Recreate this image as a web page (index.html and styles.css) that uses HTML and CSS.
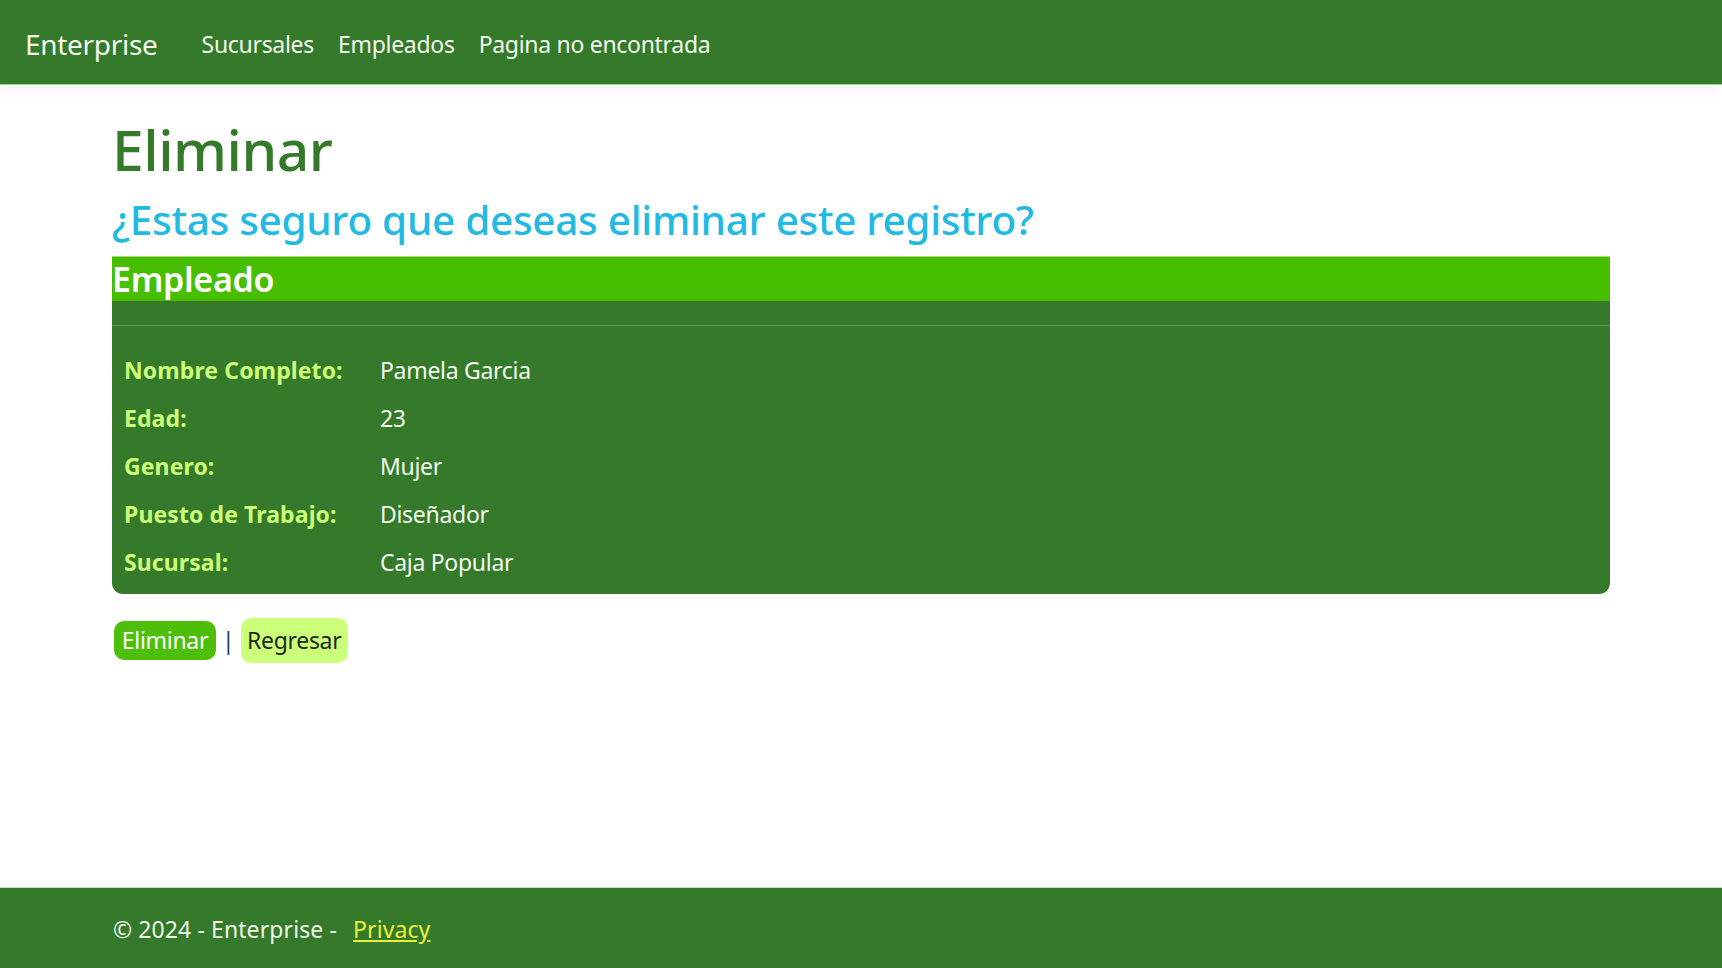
FILE: index.html
```html
<!DOCTYPE html>
<html lang="es">
<head>
<meta charset="utf-8">
<title>Eliminar - Enterprise</title>
<link rel="stylesheet" href="styles.css">
</head>
<body>
<header class="navbar">
  <a class="brand" href="#">Enterprise</a>
  <nav class="nav">
    <a class="nav-link" href="#">Sucursales</a>
    <a class="nav-link" href="#">Empleados</a>
    <a class="nav-link" href="#">Pagina no encontrada</a>
  </nav>
</header>
<main class="container">
  <h1 class="title">Eliminar</h1>
  <h2 class="question">¿Estas seguro que deseas eliminar este registro?</h2>
  <section class="card">
    <h4 class="card-header">Empleado</h4>
    <hr class="divider">
    <dl class="details">
      <dt>Nombre Completo:</dt><dd>Pamela Garcia</dd>
      <dt>Edad:</dt><dd>23</dd>
      <dt>Genero:</dt><dd>Mujer</dd>
      <dt>Puesto de Trabajo:</dt><dd>Diseñador</dd>
      <dt>Sucursal:</dt><dd>Caja Popular</dd>
    </dl>
  </section>
  <form class="actions">
    <button type="button" class="btn btn-delete">Eliminar</button>
    <span class="sep">|</span>
    <a class="btn btn-back" href="#">Regresar</a>
  </form>
</main>
<footer class="footer">
  <div class="footer-inner">© 2024 - Enterprise - <a class="privacy" href="#">Privacy</a></div>
</footer>
</body>
</html>
```
FILE: styles.css
```css
html, body {
  margin: 0;
  padding: 0;
  height: 100%;
}
body {
  font-family: "Noto Sans", "Open Sans", sans-serif;
  background: #ffffff;
  color: #212529;
  display: flex;
  flex-direction: column;
  min-height: 968px;
}
.navbar {
  height: 80px;
  padding-top: 4px;
  background: #35792a;
  border-bottom: 1px solid #a9cf98;
  box-shadow: 0 4px 14px rgba(0, 0, 0, 0.06);
  display: flex;
  align-items: center;
  padding-left: 25px;
  box-sizing: content-box;
}
.brand {
  color: #f4fbef;
  font-size: 28px;
  text-decoration: none;
  margin-right: 44px;
  letter-spacing: -0.3px;
}
.nav {
  display: flex;
  gap: 24px;
}
.nav-link {
  color: #f4fbef;
  font-size: 23px;
  text-decoration: none;
  letter-spacing: -0.3px;
}
.container {
  flex: 1;
  margin: 0 112px;
  padding-top: 30px;
}
.title {
  margin: 0;
  font-size: 57px;
  font-weight: 500;
  line-height: 1.2;
  color: #35792a;
  letter-spacing: -0.5px;
}
.question {
  margin: 13px 0 0;
  font-size: 40.5px;
  font-weight: 500;
  line-height: 1.2;
  color: #22b9e2;
  letter-spacing: -0.3px;
}
.card {
  margin-top: 11px;
  background: #35792a;
  border-radius: 0 0 11px 11px;
  overflow: hidden;
}
.card-header {
  margin: 0;
  height: 45px;
  background: #47bf00;
  color: #ffffff;
  font-size: 34px;
  font-weight: 600;
  line-height: 45px;
  letter-spacing: -0.3px;
  border-top: 1px solid #a9dd7a;
  box-sizing: border-box;
}
.divider {
  margin: 24px 0 0;
  border: 0;
  border-top: 1px solid #5e9a55;
}
.details {
  margin: 26px 0 0;
  padding: 0 12px 2px;
  display: grid;
  grid-template-columns: 256px 1fr;
  font-size: 23px;
  line-height: 36px;
}
.details dt {
  font-weight: 700;
  color: #ccff77;
  margin-bottom: 12px;
  letter-spacing: 0.1px;
}
.details dd {
  margin: 0 0 12px;
  color: #f4fbef;
  letter-spacing: -0.3px;
}
.actions {
  margin-top: 24px;
  display: flex;
  align-items: center;
  gap: 6px;
  padding-left: 2px;
}
.btn {
  font-family: inherit;
  font-size: 23px;
  border: 0;
  border-radius: 10px;
  text-decoration: none;
  display: inline-flex;
  align-items: center;
  justify-content: center;
  letter-spacing: -0.3px;
}
.btn-delete {
  background: #4dbf0b;
  color: #ffffff;
  height: 39px;
  width: 102px;
  padding: 0;
}
.btn-back {
  background: #ccff7a;
  color: #1b2a14;
  height: 45px;
  width: 107px;
}
.sep {
  color: #1d3b5a;
  font-size: 23px;
}
.footer {
  height: 81px;
  background: #35792a;
  border-top: 1px solid #c8ddc0;
  display: flex;
  align-items: center;
  padding-top: 2px;
  box-sizing: border-box;
}
.footer-inner {
  padding-left: 113px;
  color: #eef7ea;
  font-size: 23px;
  letter-spacing: 0.1px;
  white-space: pre;
}
.privacy {
  color: #e8f03c;
  text-decoration: underline;
  margin-left: 10px;
}
```
